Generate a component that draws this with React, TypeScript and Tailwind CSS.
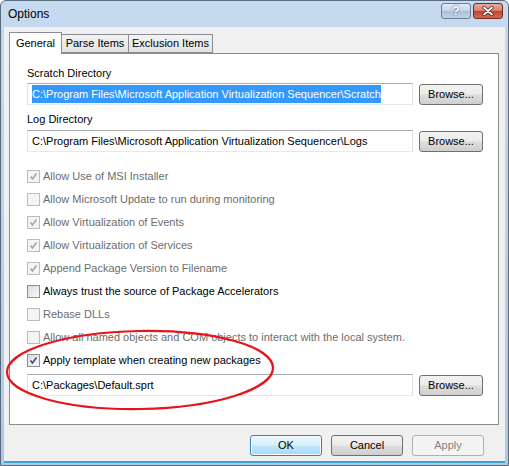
const font = "font-['Liberation_Sans',Arial,sans-serif]"

const Button = ({ label, primary, disabled }: { label: string; primary?: boolean; disabled?: boolean }) => {
  let cls = "border-[#707070] bg-[linear-gradient(#f2f2f2_0%,#ebebeb_48%,#dddddd_52%,#cfcfcf_100%)] text-black"
  if (primary) cls = "border-[#3c7fb1] bg-[linear-gradient(#eaf6fd_0%,#d9f0fc_48%,#bee6fd_52%,#a7d9f5_100%)] text-black shadow-[inset_0_0_0_1px_#f6fbfe]"
  if (disabled) cls = "border-[#adb2b5] bg-[#f4f4f4] text-[#838383]"
  return (
    <div className={`flex items-center justify-center w-[72px] h-[21px] rounded-[3px] border text-[11px] ${cls}`}>
      {label}
    </div>
  )
}

const Browse = () => (
  <div className="flex items-center justify-center w-[64px] h-[21px] mt-[1px] rounded-[3px] border border-[#707070] bg-[linear-gradient(#f2f2f2_0%,#ebebeb_48%,#dddddd_52%,#cfcfcf_100%)] text-[11px] text-black">
    Browse...
  </div>
)

const PathInput = ({ value, selected }: { value: string; selected?: boolean }) => (
  <div className="flex items-center w-[386px] h-[22px] border border-[#abadb3] border-l-[#e2e3ea] border-r-[#dbdfe6] border-b-[#e3e9ef] bg-white pl-[4px] text-[11px] whitespace-nowrap overflow-hidden">
    {selected ? <span className="bg-[#3399ff] text-white leading-[18px]">{value}</span> : <span className="text-black">{value}</span>}
  </div>
)

const Check = ({ checked, disabled, label }: { checked?: boolean; disabled?: boolean; label: string }) => {
  const box = disabled
    ? "border-[#bcbcbc] bg-[#f4f4f4]"
    : "border-[#8e8f8f] bg-[linear-gradient(135deg,#d9dcdf,#f7f7f7)]"
  const tick = disabled ? "#a5a5a5" : "#3c4f86"
  return (
    <div className="flex items-center h-[23px]">
      <div className={`flex items-center justify-center w-[13px] h-[13px] border ${box}`}>
        {checked && (
          <svg width="9" height="9" viewBox="0 0 9 9">
            <path d="M1.5 4.5 L3.5 7 L7.5 1.5" fill="none" stroke={tick} strokeWidth="1.6" />
          </svg>
        )}
      </div>
      <span className={`ml-[3px] text-[11px] whitespace-nowrap ${disabled ? "text-[#6d6d6d]" : "text-black"}`}>{label}</span>
    </div>
  )
}

export default function App() {
  return (
    <div className={`relative w-[509px] h-[466px] overflow-hidden rounded-t-[6px] border border-[#5a6a7e] bg-[linear-gradient(#c6daf0,#adc8e6)] ${font}`}>
      {/* title bar */}
      <div className="flex items-center h-[26px] pl-[7px] pr-[5px]">
        <span className="text-[12px] text-black">Options</span>
        <div className="ml-auto flex gap-[2px] -mt-[6px]">
          <div className="flex items-center justify-center w-[30px] h-[16px] rounded-[3px] border border-[#6d7e96] bg-[linear-gradient(#dfeaf6_0%,#c3d5ea_50%,#a9c0dc_51%,#bfd3ea_100%)] text-[12px] font-bold text-white [text-shadow:0_0_2px_#2c3e5c]">
            ?
          </div>
          <div className="flex items-center justify-center w-[30px] h-[16px] rounded-[3px] border border-[#6b2a22] bg-[linear-gradient(#e9a99a_0%,#d7806d_50%,#c4442c_51%,#d36a4e_100%)]">
            <svg width="12" height="10" viewBox="0 0 12 10">
              <path d="M2 1.5 L10 8.5 M10 1.5 L2 8.5" stroke="#4b1a12" strokeWidth="3.2" strokeLinecap="round" />
              <path d="M2 1.5 L10 8.5 M10 1.5 L2 8.5" stroke="white" strokeWidth="1.8" strokeLinecap="round" />
            </svg>
          </div>
        </div>
      </div>

      {/* client area */}
      <div className="ml-[3px] mr-[3px] h-[436px] bg-[#f0f0f0] border-b-[2px] border-b-[#3aa5d5] pl-[5px] pr-[5px] pt-[4px]">
        <div className="flex items-end h-[22px] text-[11px]">
          <div className="relative z-10 flex items-center justify-center h-[22px] -mb-[1px] w-[53px] border border-b-0 border-[#898c95] bg-white">General</div>
          <div className="flex items-center justify-center h-[19px] w-[67px] border border-[#898c95] border-l-0 bg-[linear-gradient(#f3f3f3,#e3e3e3)]">Parse Items</div>
          <div className="flex items-center justify-center h-[19px] w-[84px] border border-[#898c95] border-l-0 bg-[linear-gradient(#f3f3f3,#e3e3e3)]">Exclusion Items</div>
        </div>
        <div className="w-[490px] h-[372px] border border-[#898c95] bg-white pl-[17px] pt-[11px]">
          <div className="h-[16px] leading-[16px] text-[11px] text-black">Scratch Directory</div>
          <div className="flex gap-[6px] mt-[2px]">
            <PathInput value="C:\Program Files\Microsoft Application Virtualization Sequencer\Scratch" selected />
            <Browse />
          </div>
          <div className="h-[16px] leading-[16px] mt-[6px] text-[11px] text-black">Log Directory</div>
          <div className="flex gap-[6px] mt-[3px]">
            <PathInput value="C:\Program Files\Microsoft Application Virtualization Sequencer\Logs" />
            <Browse />
          </div>
          <div className="mt-[13px] flex flex-col">
            <Check checked disabled label="Allow Use of MSI Installer" />
            <Check disabled label="Allow Microsoft Update to run during monitoring" />
            <Check checked disabled label="Allow Virtualization of Events" />
            <Check checked disabled label="Allow Virtualization of Services" />
            <Check checked disabled label="Append Package Version to Filename" />
            <Check label="Always trust the source of Package Accelerators" />
            <Check disabled label="Rebase DLLs" />
            <Check disabled label="Allow all named objects and COM objects to interact with the local system." />
            <Check checked label="Apply template when creating new packages" />
          </div>
          <div className="flex gap-[6px] mt-[2px]">
            <PathInput value="C:\Packages\Default.sprt" />
            <Browse />
          </div>
        </div>
        <div className="flex justify-end gap-[9px] mt-[10px] pr-[16px]">
          <Button label="OK" primary />
          <Button label="Cancel" />
          <Button label="Apply" disabled />
        </div>
      </div>

      {/* red annotation ellipse */}
      <svg className="absolute left-0 top-0 pointer-events-none" width="509" height="466">
        <ellipse cx="139" cy="369" rx="133" ry="39" fill="none" stroke="#e8141b" strokeWidth="2.2" transform="rotate(-1 139 369)" />
      </svg>
    </div>
  )
}
